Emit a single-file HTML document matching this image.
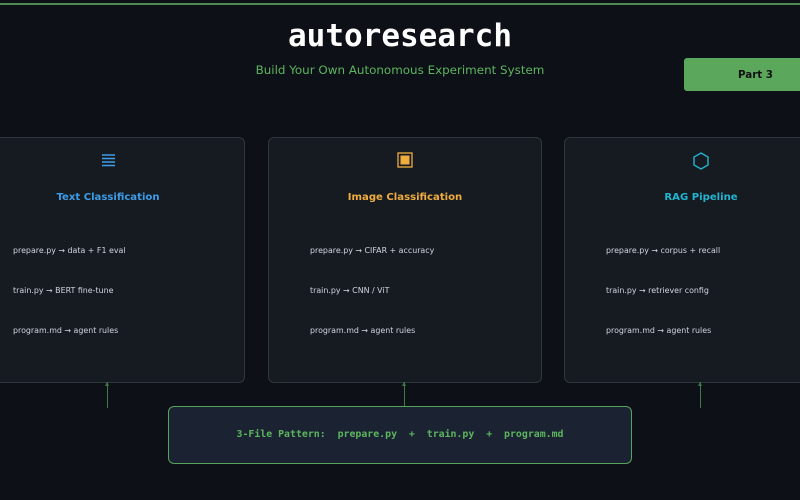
<!DOCTYPE html>
<html><head><style>
body{margin:0;width:800px;height:500px;background:#0d1017;overflow:hidden;position:relative;font-family:"DejaVu Sans","Liberation Sans",sans-serif}
.top{position:absolute;left:0;top:3px;width:800px;height:2px;background:#4e8a52}
.title{position:absolute;top:18px;width:800px;text-align:center;font-family:"DejaVu Sans Mono","Liberation Mono",monospace;font-weight:bold;font-size:31px;color:#fff}
.sub{position:absolute;top:63px;width:800px;text-align:center;font-size:11.9px;color:#5cb55e}
.part{position:absolute;left:684px;top:58px;width:130px;height:33px;background:#5ba85c;border-radius:3px;color:#111;font-weight:bold;font-size:10.3px;line-height:34px;text-indent:54px}
.card{position:absolute;top:137px;width:274px;height:246px;background:#161b22;border:1px solid #30363d;border-radius:6px;box-sizing:border-box}
.icon{position:absolute;top:14px;width:100%;text-align:center}
.ct{position:absolute;top:54px;width:100%;text-align:center;font-weight:bold;font-size:10.1px}
.it{position:absolute;left:41px;font-size:7.9px;color:#d0d6de}
.ar{position:absolute;top:382px;width:1px;height:26px;background:#3f7a45}
.ar:before{content:"";position:absolute;left:-2px;top:0;border-left:2.5px solid transparent;border-right:2.5px solid transparent;border-bottom:4px solid #3f7a45}
.box{position:absolute;left:168px;top:406px;width:464px;height:58px;box-sizing:border-box;background:#1b2332;border:1.5px solid #56a35a;border-radius:6px;text-align:center;line-height:56px;font-family:"DejaVu Sans Mono","Liberation Mono",monospace;font-weight:bold;font-size:9.9px;color:#5cb55e;white-space:pre}
</style></head><body>
<div class="top"></div>
<div class="title">autoresearch</div>
<div class="sub">Build Your Own Autonomous Experiment System</div>
<div class="part">Part 3</div>

<div class="card" style="left:-29px">
<div class="icon"><svg width="13" height="14" viewBox="0 0 13 14"><g stroke="#3d9de8" stroke-width="1.6"><path d="M0 2H13M0 5.5H13M0 9H13M0 12.5H13"/></g></svg></div>
<div class="ct" style="color:#3d9de8">Text Classification</div>
<div class="it" style="top:108px">prepare.py → data + F1 eval</div>
<div class="it" style="top:148px">train.py → BERT fine-tune</div>
<div class="it" style="top:188px">program.md → agent rules</div>
</div>
<div class="card" style="left:268px">
<div class="icon"><svg width="16" height="16" viewBox="0 0 16 16"><rect x="1" y="1" width="14" height="14" fill="none" stroke="#f0ad3d" stroke-width="1.3"/><rect x="3.5" y="3.5" width="9" height="9" fill="#f0ad3d"/></svg></div>
<div class="ct" style="color:#f0ad3d">Image Classification</div>
<div class="it" style="top:108px">prepare.py → CIFAR + accuracy</div>
<div class="it" style="top:148px">train.py → CNN / ViT</div>
<div class="it" style="top:188px">program.md → agent rules</div>
</div>
<div class="card" style="left:564px">
<div class="icon"><svg width="16" height="18" viewBox="0 0 16 18"><path d="M8 1L15 5V13L8 17L1 13V5Z" fill="none" stroke="#22b5cf" stroke-width="1.4"/></svg></div>
<div class="ct" style="color:#22b5cf">RAG Pipeline</div>
<div class="it" style="top:108px">prepare.py → corpus + recall</div>
<div class="it" style="top:148px">train.py → retriever config</div>
<div class="it" style="top:188px">program.md → agent rules</div>
</div>
<div class="ar" style="left:107px"></div>
<div class="ar" style="left:404px"></div>
<div class="ar" style="left:700px"></div>
<div class="box">3-File Pattern:  prepare.py  +  train.py  +  program.md</div>
</body></html>
